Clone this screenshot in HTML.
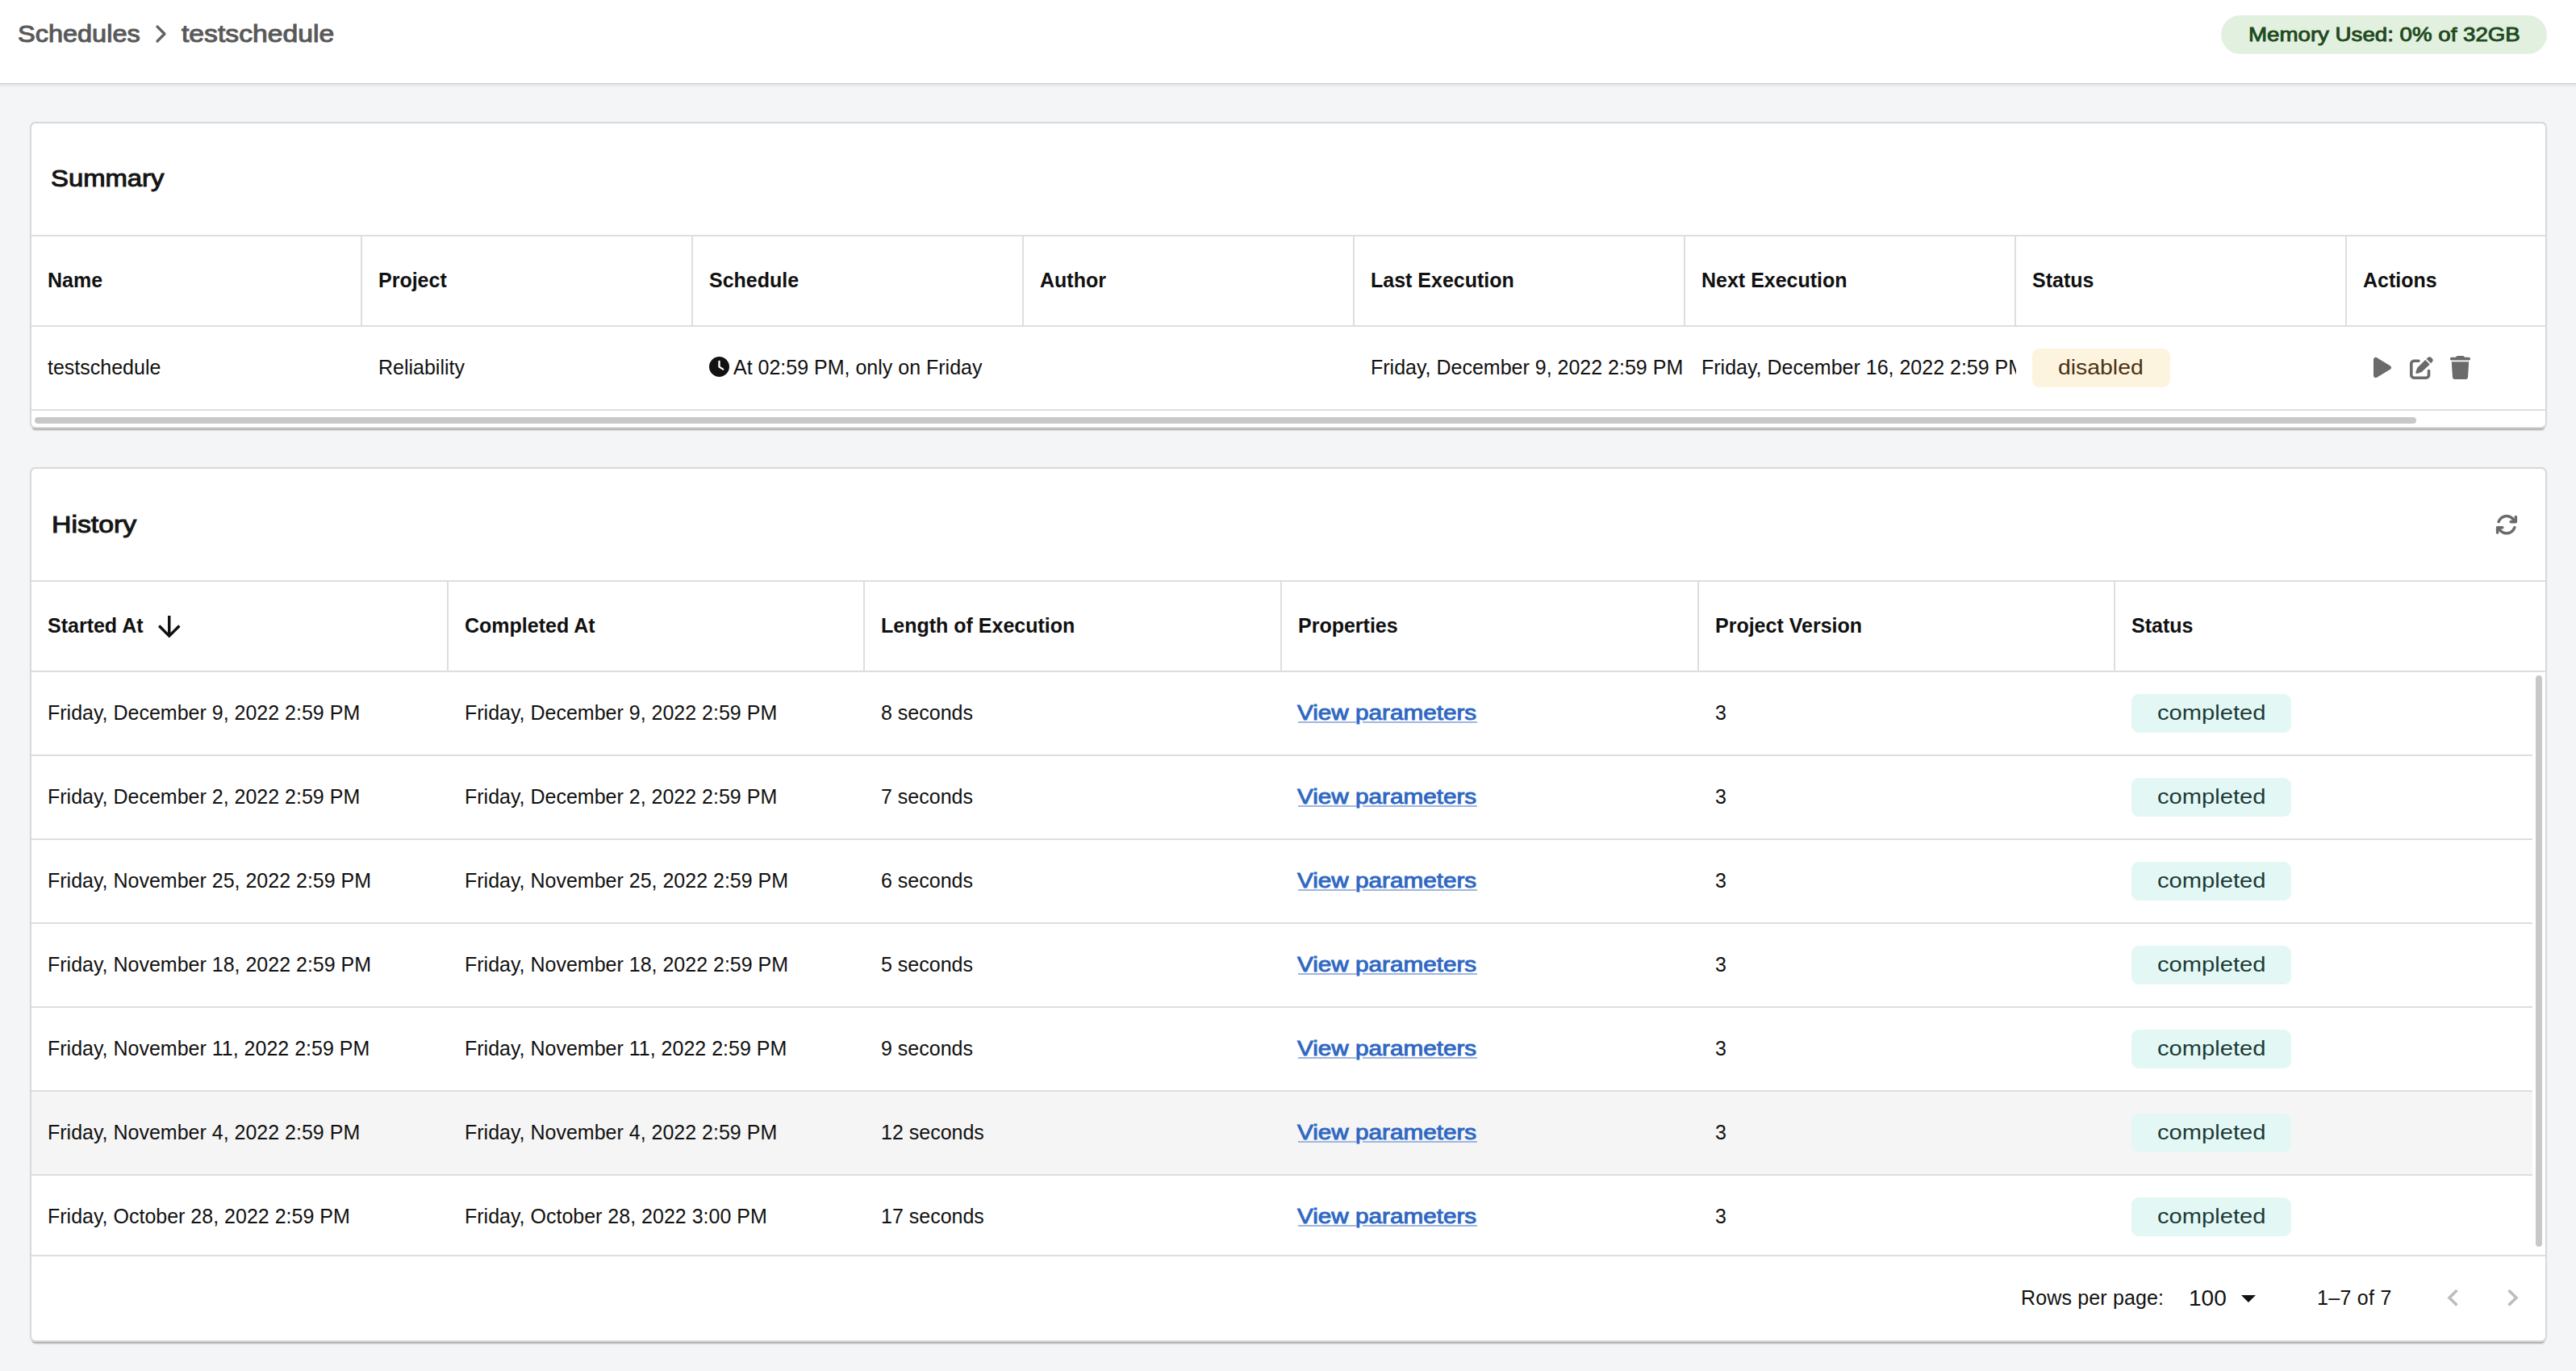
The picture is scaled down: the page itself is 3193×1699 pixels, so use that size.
<!DOCTYPE html>
<html><head><meta charset="utf-8"><style>
*{box-sizing:border-box;margin:0;padding:0}
html,body{width:3193px;height:1699px;overflow:hidden;background:#f4f5f7;font-family:"Liberation Sans",sans-serif;color:#111}
.t{position:absolute;white-space:nowrap}
.b{font-weight:bold}
.abs{position:absolute}
.hl{position:absolute;height:2px;background:#dedede}
.vl{position:absolute;width:2px;background:#dedede}
.card{position:absolute;background:#fff;border-radius:5px;box-shadow:0 0 0 2px #d8d9db,0 0 2px 2px rgba(0,0,0,.06),0 5px 2px -1px rgba(0,0,0,.30)}
.chip{position:absolute;height:48px;border-radius:9px}
svg{position:absolute;display:block}
</style></head><body>
<div class="abs" style="left:-10px;top:0;width:3213px;height:103px;background:#fff;box-shadow:0 1px 0 rgba(0,0,0,.07),0 3px 3px rgba(0,0,0,.09)"></div>
<div class="t " style="left:22px;top:28.35px;font-size:29px;line-height:29px;color:#595959;-webkit-text-stroke:1px #595959;transform:scaleX(1.12);transform-origin:0 0">Schedules</div>
<svg style="left:190px;top:29px" width="20" height="26" viewBox="0 0 20 26"><path d="M5 4 L14 13 L5 22" fill="none" stroke="#626262" stroke-width="3.2" stroke-linecap="round" stroke-linejoin="round"/></svg>
<div class="t " style="left:225px;top:28.35px;font-size:29px;line-height:29px;color:#595959;-webkit-text-stroke:1px #595959;transform:scaleX(1.162);transform-origin:0 0">testschedule</div>
<div class="abs" style="left:2753px;top:19px;width:404px;height:48px;border-radius:24px;background:#e2f1df"></div>
<div class="t " style="left:2787px;top:30.60px;font-size:24px;line-height:24px;color:#1f4a21;-webkit-text-stroke:0.9px #1f4a21;transform:scaleX(1.153);transform-origin:0 0">Memory Used: 0% of 32GB</div>
<div class="card" style="left:39px;top:153px;width:3116px;height:376px"></div>
<div class="t " style="left:63px;top:207.35px;font-size:29px;line-height:29px;color:#151515;-webkit-text-stroke:1px #151515;transform:scaleX(1.132);transform-origin:0 0">Summary</div>
<div class="hl" style="left:39px;top:291px;width:3116px"></div>
<div class="hl" style="left:39px;top:403px;width:3116px"></div>
<div class="hl" style="left:39px;top:507px;width:3116px"></div>
<div class="vl" style="left:447px;top:293px;height:110px"></div>
<div class="vl" style="left:857px;top:293px;height:110px"></div>
<div class="vl" style="left:1267px;top:293px;height:110px"></div>
<div class="vl" style="left:1677px;top:293px;height:110px"></div>
<div class="vl" style="left:2087px;top:293px;height:110px"></div>
<div class="vl" style="left:2497px;top:293px;height:110px"></div>
<div class="vl" style="left:2907px;top:293px;height:110px"></div>
<div class="t b" style="left:59px;top:334.75px;font-size:25px;line-height:25px;">Name</div>
<div class="t b" style="left:469px;top:334.75px;font-size:25px;line-height:25px;">Project</div>
<div class="t b" style="left:879px;top:334.75px;font-size:25px;line-height:25px;">Schedule</div>
<div class="t b" style="left:1289px;top:334.75px;font-size:25px;line-height:25px;">Author</div>
<div class="t b" style="left:1699px;top:334.75px;font-size:25px;line-height:25px;">Last Execution</div>
<div class="t b" style="left:2109px;top:334.75px;font-size:25px;line-height:25px;">Next Execution</div>
<div class="t b" style="left:2519px;top:334.75px;font-size:25px;line-height:25px;">Status</div>
<div class="t b" style="left:2929px;top:334.75px;font-size:25px;line-height:25px;">Actions</div>
<div class="t " style="left:59px;top:442.75px;font-size:25px;line-height:25px;">testschedule</div>
<div class="t " style="left:469px;top:442.75px;font-size:25px;line-height:25px;">Reliability</div>
<svg style="left:879px;top:442px" width="25" height="25" viewBox="0 0 512 512"><path fill="#111" d="M256 0a256 256 0 1 1 0 512A256 256 0 1 1 256 0zM232 120V256c0 8 4 15.5 10.7 20l96 64c11 7.4 25.9 4.4 33.3-6.7s4.4-25.9-6.7-33.3L280 243.2V120c0-13.3-10.7-24-24-24s-24 10.7-24 24z"/></svg>
<div class="t " style="left:909px;top:442.75px;font-size:25px;line-height:25px;">At 02:59 PM, only on Friday</div>
<div class="t " style="left:1699px;top:442.75px;font-size:25px;line-height:25px;">Friday, December 9, 2022 2:59 PM</div>
<div class="abs" style="left:2109px;top:430px;width:390px;height:50px;overflow:hidden"><div class="t " style="left:0px;top:12.75px;font-size:25px;line-height:25px;">Friday, December 16, 2022 2:59 PM</div>
</div>
<div class="chip" style="left:2519px;top:432px;width:171px;background:#fdf4df"></div>
<div class="t " style="left:2551px;top:442.75px;font-size:25px;line-height:25px;color:#4a3214;transform:scaleX(1.135);transform-origin:0 0">disabled</div>
<svg style="left:2942px;top:441px" width="22" height="29" viewBox="0 0 384 512" preserveAspectRatio="none"><path fill="#6b6b6b" d="M73 39c-14.8-9.1-33.4-9.4-48.5-.9S0 62.6 0 80V432c0 17.4 9.4 33.4 24.5 41.9s33.7 8.1 48.5-.9L361 297c14.3-8.7 23-24.2 23-41s-8.7-32.2-23-41L73 39z"/></svg>
<svg style="left:2987px;top:442px" width="29" height="28" viewBox="0 0 512 512" preserveAspectRatio="none"><path fill="#6b6b6b" d="M471.6 21.7c-21.9-21.9-57.3-21.9-79.2 0L362.3 51.7l97.9 97.9 30.1-30.1c21.9-21.9 21.9-57.3 0-79.2L471.6 21.7zm-299.2 220c-6.1 6.1-10.8 13.6-13.5 21.9l-29.6 88.8c-2.9 8.6-.6 18.1 5.8 24.6s15.9 8.7 24.6 5.8l88.8-29.6c8.2-2.7 15.7-7.4 21.9-13.5L437.7 172.3 339.7 74.3 172.4 241.7zM96 64C43 64 0 107 0 160V416c0 53 43 96 96 96H352c53 0 96-43 96-96V320c0-17.7-14.3-32-32-32s-32 14.3-32 32v96c0 17.7-14.3 32-32 32H96c-17.7 0-32-14.3-32-32V160c0-17.7 14.3-32 32-32h96c17.7 0 32-14.3 32-32s-14.3-32-32-32H96z"/></svg>
<svg style="left:3037px;top:441px" width="25" height="29" viewBox="0 0 448 512" preserveAspectRatio="none"><path fill="#6b6b6b" d="M135.2 17.7L128 32H32C14.3 32 0 46.3 0 64S14.3 96 32 96H416c17.7 0 32-14.3 32-32s-14.3-32-32-32H320l-7.2-14.3C307.4 6.8 296.3 0 284.2 0H163.8c-12.1 0-23.2 6.8-28.6 17.7zM416 128H32L53.2 467c1.6 25.3 22.6 45 47.9 45H346.9c25.3 0 46.3-19.7 47.9-45L416 128z"/></svg>
<div class="abs" style="left:43px;top:517px;width:2952px;height:8px;border-radius:4px;background:#c8c8c8"></div>
<div class="card" style="left:39px;top:581px;width:3116px;height:1080px"></div>
<div class="t " style="left:64px;top:635.85px;font-size:29px;line-height:29px;color:#151515;-webkit-text-stroke:1px #151515;transform:scaleX(1.166);transform-origin:0 0">History</div>
<svg style="left:3093px;top:635.5px" width="28" height="28.3" viewBox="0 0 512 512" preserveAspectRatio="none"><path fill="#6b6b6b" d="M105.1 202.6c7.7-21.8 20.2-42.3 37.8-59.8c62.5-62.5 163.8-62.5 226.3 0L386.3 160H352c-17.7 0-32 14.3-32 32s14.3 32 32 32H463.5c0 0 0 0 0 0h.4c17.7 0 32-14.3 32-32V80c0-17.7-14.3-32-32-32s-32 14.3-32 32v35.2L414.4 97.6c-87.5-87.5-229.3-87.5-316.8 0C73.2 122 55.6 150.7 44.8 181.4c-5.9 16.7 2.9 34.9 19.5 40.8s34.9-2.9 40.8-19.5zM39 289.3c-5 1.5-9.8 4.2-13.7 8.2c-4 4-6.7 8.8-8.1 14c-.3 1.2-.6 2.5-.8 3.8c-.3 1.7-.4 3.4-.4 5.1V432c0 17.7 14.3 32 32 32s32-14.3 32-32V396.9l17.6 17.5 0 0c87.5 87.4 229.3 87.4 316.7 0c24.4-24.4 42.1-53.1 52.9-83.7c5.9-16.7-2.9-34.9-19.5-40.8s-34.9 2.9-40.8 19.5c-7.7 21.8-20.2 42.3-37.8 59.8c-62.5 62.5-163.8 62.5-226.3 0l-.1-.1L125.6 352H160c17.7 0 32-14.3 32-32s-14.3-32-32-32H48.4c-1.6 0-3.2 .1-4.8 .3s-3.1 .5-4.6 1z"/></svg>
<div class="abs" style="left:39px;top:1353px;width:3100px;height:102px;background:#f5f5f5"></div>
<div class="hl" style="left:39px;top:719px;width:3116px"></div>
<div class="hl" style="left:39px;top:831px;width:3116px"></div>
<div class="hl" style="left:39px;top:935px;width:3100px"></div>
<div class="hl" style="left:39px;top:1039px;width:3100px"></div>
<div class="hl" style="left:39px;top:1143px;width:3100px"></div>
<div class="hl" style="left:39px;top:1247px;width:3100px"></div>
<div class="hl" style="left:39px;top:1351px;width:3100px"></div>
<div class="hl" style="left:39px;top:1455px;width:3100px"></div>
<div class="hl" style="left:39px;top:1555px;width:3116px"></div>
<div class="vl" style="left:554px;top:721px;height:110px"></div>
<div class="vl" style="left:1070px;top:721px;height:110px"></div>
<div class="vl" style="left:1587px;top:721px;height:110px"></div>
<div class="vl" style="left:2104px;top:721px;height:110px"></div>
<div class="vl" style="left:2620px;top:721px;height:110px"></div>
<div class="t b" style="left:59px;top:762.75px;font-size:25px;line-height:25px;">Started At</div>
<div class="t b" style="left:576px;top:762.75px;font-size:25px;line-height:25px;">Completed At</div>
<div class="t b" style="left:1092px;top:762.75px;font-size:25px;line-height:25px;">Length of Execution</div>
<div class="t b" style="left:1609px;top:762.75px;font-size:25px;line-height:25px;">Properties</div>
<div class="t b" style="left:2126px;top:762.75px;font-size:25px;line-height:25px;">Project Version</div>
<div class="t b" style="left:2642px;top:762.75px;font-size:25px;line-height:25px;">Status</div>
<svg style="left:188.5px;top:755.5px" width="41.5" height="41.5" viewBox="0 0 24 24"><path fill="#111" d="M20 12l-1.41-1.41L13 16.17V4h-2v12.17l-5.58-5.59L4 12l8 8 8-8z"/></svg>
<div class="t " style="left:59px;top:870.75px;font-size:25px;line-height:25px;">Friday, December 9, 2022 2:59 PM</div>
<div class="t " style="left:576px;top:870.75px;font-size:25px;line-height:25px;">Friday, December 9, 2022 2:59 PM</div>
<div class="t " style="left:1092px;top:870.75px;font-size:25px;line-height:25px;">8 seconds</div>
<div class="t " style="left:1608px;top:871.45px;font-size:25px;line-height:25px;color:#2f68c3;-webkit-text-stroke:0.9px #2f68c3;transform:scaleX(1.187);transform-origin:0 0">View parameters</div>
<div class="abs" style="left:1609px;top:894px;width:72px;height:2px;background:#a0b6de"></div>
<div class="abs" style="left:1689px;top:894px;width:142px;height:2px;background:#a0b6de"></div>
<div class="t " style="left:2126px;top:870.75px;font-size:25px;line-height:25px;">3</div>
<div class="chip" style="left:2642px;top:860px;width:198px;background:#e3f8f5"></div>
<div class="t " style="left:2674px;top:870.75px;font-size:25px;line-height:25px;color:#1d3b37;transform:scaleX(1.165);transform-origin:0 0">completed</div>
<div class="t " style="left:59px;top:974.75px;font-size:25px;line-height:25px;">Friday, December 2, 2022 2:59 PM</div>
<div class="t " style="left:576px;top:974.75px;font-size:25px;line-height:25px;">Friday, December 2, 2022 2:59 PM</div>
<div class="t " style="left:1092px;top:974.75px;font-size:25px;line-height:25px;">7 seconds</div>
<div class="t " style="left:1608px;top:975.45px;font-size:25px;line-height:25px;color:#2f68c3;-webkit-text-stroke:0.9px #2f68c3;transform:scaleX(1.187);transform-origin:0 0">View parameters</div>
<div class="abs" style="left:1609px;top:998px;width:72px;height:2px;background:#a0b6de"></div>
<div class="abs" style="left:1689px;top:998px;width:142px;height:2px;background:#a0b6de"></div>
<div class="t " style="left:2126px;top:974.75px;font-size:25px;line-height:25px;">3</div>
<div class="chip" style="left:2642px;top:964px;width:198px;background:#e3f8f5"></div>
<div class="t " style="left:2674px;top:974.75px;font-size:25px;line-height:25px;color:#1d3b37;transform:scaleX(1.165);transform-origin:0 0">completed</div>
<div class="t " style="left:59px;top:1078.75px;font-size:25px;line-height:25px;">Friday, November 25, 2022 2:59 PM</div>
<div class="t " style="left:576px;top:1078.75px;font-size:25px;line-height:25px;">Friday, November 25, 2022 2:59 PM</div>
<div class="t " style="left:1092px;top:1078.75px;font-size:25px;line-height:25px;">6 seconds</div>
<div class="t " style="left:1608px;top:1079.45px;font-size:25px;line-height:25px;color:#2f68c3;-webkit-text-stroke:0.9px #2f68c3;transform:scaleX(1.187);transform-origin:0 0">View parameters</div>
<div class="abs" style="left:1609px;top:1102px;width:72px;height:2px;background:#a0b6de"></div>
<div class="abs" style="left:1689px;top:1102px;width:142px;height:2px;background:#a0b6de"></div>
<div class="t " style="left:2126px;top:1078.75px;font-size:25px;line-height:25px;">3</div>
<div class="chip" style="left:2642px;top:1068px;width:198px;background:#e3f8f5"></div>
<div class="t " style="left:2674px;top:1078.75px;font-size:25px;line-height:25px;color:#1d3b37;transform:scaleX(1.165);transform-origin:0 0">completed</div>
<div class="t " style="left:59px;top:1182.75px;font-size:25px;line-height:25px;">Friday, November 18, 2022 2:59 PM</div>
<div class="t " style="left:576px;top:1182.75px;font-size:25px;line-height:25px;">Friday, November 18, 2022 2:59 PM</div>
<div class="t " style="left:1092px;top:1182.75px;font-size:25px;line-height:25px;">5 seconds</div>
<div class="t " style="left:1608px;top:1183.45px;font-size:25px;line-height:25px;color:#2f68c3;-webkit-text-stroke:0.9px #2f68c3;transform:scaleX(1.187);transform-origin:0 0">View parameters</div>
<div class="abs" style="left:1609px;top:1206px;width:72px;height:2px;background:#a0b6de"></div>
<div class="abs" style="left:1689px;top:1206px;width:142px;height:2px;background:#a0b6de"></div>
<div class="t " style="left:2126px;top:1182.75px;font-size:25px;line-height:25px;">3</div>
<div class="chip" style="left:2642px;top:1172px;width:198px;background:#e3f8f5"></div>
<div class="t " style="left:2674px;top:1182.75px;font-size:25px;line-height:25px;color:#1d3b37;transform:scaleX(1.165);transform-origin:0 0">completed</div>
<div class="t " style="left:59px;top:1286.75px;font-size:25px;line-height:25px;">Friday, November 11, 2022 2:59 PM</div>
<div class="t " style="left:576px;top:1286.75px;font-size:25px;line-height:25px;">Friday, November 11, 2022 2:59 PM</div>
<div class="t " style="left:1092px;top:1286.75px;font-size:25px;line-height:25px;">9 seconds</div>
<div class="t " style="left:1608px;top:1287.45px;font-size:25px;line-height:25px;color:#2f68c3;-webkit-text-stroke:0.9px #2f68c3;transform:scaleX(1.187);transform-origin:0 0">View parameters</div>
<div class="abs" style="left:1609px;top:1310px;width:72px;height:2px;background:#a0b6de"></div>
<div class="abs" style="left:1689px;top:1310px;width:142px;height:2px;background:#a0b6de"></div>
<div class="t " style="left:2126px;top:1286.75px;font-size:25px;line-height:25px;">3</div>
<div class="chip" style="left:2642px;top:1276px;width:198px;background:#e3f8f5"></div>
<div class="t " style="left:2674px;top:1286.75px;font-size:25px;line-height:25px;color:#1d3b37;transform:scaleX(1.165);transform-origin:0 0">completed</div>
<div class="t " style="left:59px;top:1390.75px;font-size:25px;line-height:25px;">Friday, November 4, 2022 2:59 PM</div>
<div class="t " style="left:576px;top:1390.75px;font-size:25px;line-height:25px;">Friday, November 4, 2022 2:59 PM</div>
<div class="t " style="left:1092px;top:1390.75px;font-size:25px;line-height:25px;">12 seconds</div>
<div class="t " style="left:1608px;top:1391.45px;font-size:25px;line-height:25px;color:#2f68c3;-webkit-text-stroke:0.9px #2f68c3;transform:scaleX(1.187);transform-origin:0 0">View parameters</div>
<div class="abs" style="left:1609px;top:1414px;width:72px;height:2px;background:#a0b6de"></div>
<div class="abs" style="left:1689px;top:1414px;width:142px;height:2px;background:#a0b6de"></div>
<div class="t " style="left:2126px;top:1390.75px;font-size:25px;line-height:25px;">3</div>
<div class="chip" style="left:2642px;top:1380px;width:198px;background:#e3f8f5"></div>
<div class="t " style="left:2674px;top:1390.75px;font-size:25px;line-height:25px;color:#1d3b37;transform:scaleX(1.165);transform-origin:0 0">completed</div>
<div class="t " style="left:59px;top:1494.75px;font-size:25px;line-height:25px;">Friday, October 28, 2022 2:59 PM</div>
<div class="t " style="left:576px;top:1494.75px;font-size:25px;line-height:25px;">Friday, October 28, 2022 3:00 PM</div>
<div class="t " style="left:1092px;top:1494.75px;font-size:25px;line-height:25px;">17 seconds</div>
<div class="t " style="left:1608px;top:1495.45px;font-size:25px;line-height:25px;color:#2f68c3;-webkit-text-stroke:0.9px #2f68c3;transform:scaleX(1.187);transform-origin:0 0">View parameters</div>
<div class="abs" style="left:1609px;top:1518px;width:72px;height:2px;background:#a0b6de"></div>
<div class="abs" style="left:1689px;top:1518px;width:142px;height:2px;background:#a0b6de"></div>
<div class="t " style="left:2126px;top:1494.75px;font-size:25px;line-height:25px;">3</div>
<div class="chip" style="left:2642px;top:1484px;width:198px;background:#e3f8f5"></div>
<div class="t " style="left:2674px;top:1494.75px;font-size:25px;line-height:25px;color:#1d3b37;transform:scaleX(1.165);transform-origin:0 0">completed</div>
<div class="abs" style="left:3143px;top:837px;width:8px;height:708px;border-radius:4px;background:#c8c8c8"></div>
<div class="t " style="left:2505px;top:1595.75px;font-size:25px;line-height:25px;letter-spacing:0.15px">Rows per page:</div>
<div class="t " style="left:2713px;top:1595.20px;font-size:28px;line-height:28px;">100</div>
<svg style="left:2778px;top:1605px" width="18" height="9" viewBox="0 0 18 9"><path fill="#111" d="M0 0h18L9 9z"/></svg>
<div class="t " style="left:2872px;top:1595.75px;font-size:25px;line-height:25px;letter-spacing:0.3px">1–7 of 7</div>
<svg style="left:3030px;top:1596px" width="20" height="24" viewBox="0 0 20 24"><path d="M15.5 3L6 12.2l9.5 9.3" fill="none" stroke="#bdbdbd" stroke-width="3.6"/></svg>
<svg style="left:3104px;top:1596px" width="20" height="24" viewBox="0 0 20 24"><path d="M5.5 3L15 12.2l-9.5 9.3" fill="none" stroke="#bdbdbd" stroke-width="3.6"/></svg>
</body></html>
